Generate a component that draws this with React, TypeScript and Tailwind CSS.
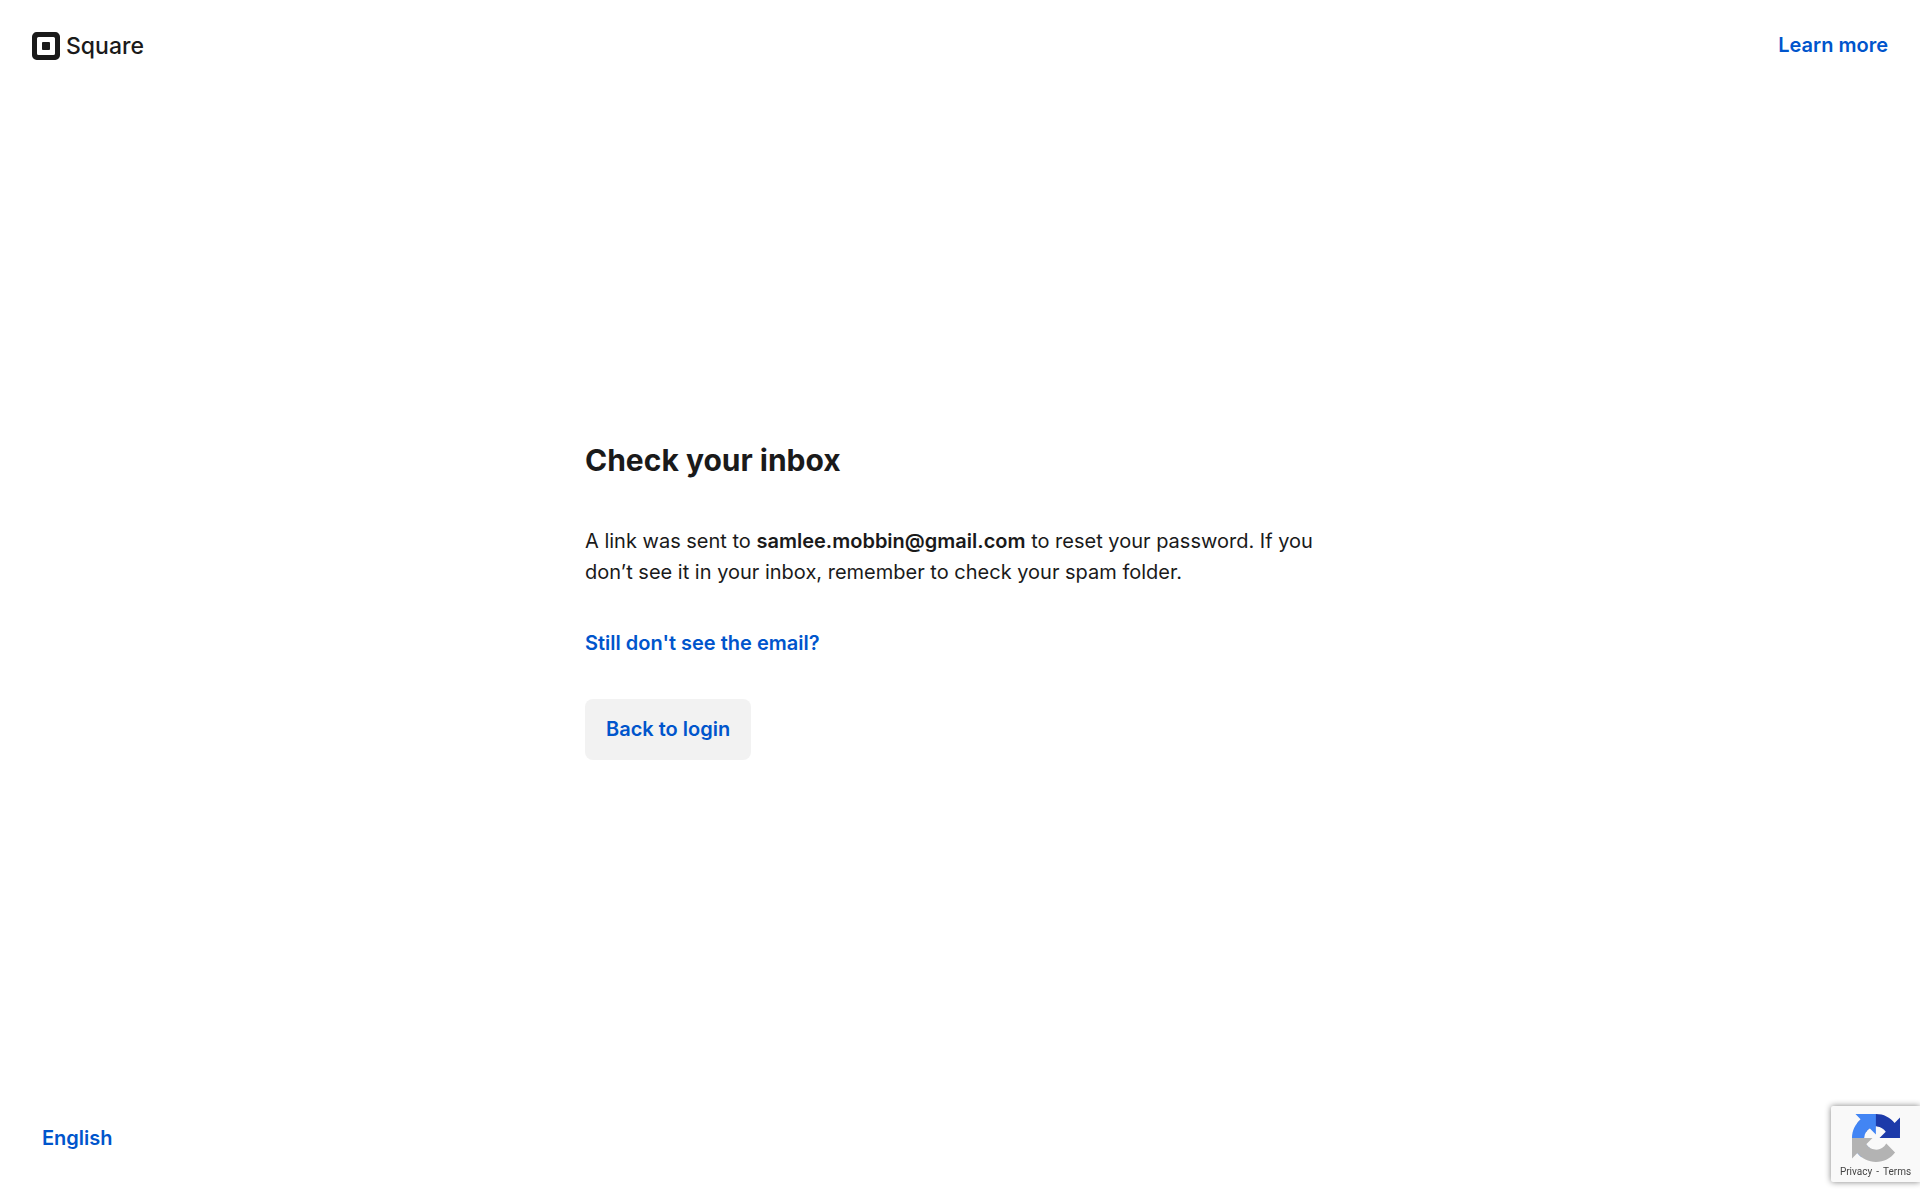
function SquareLogo() {
  return (
    <a href="/" className="flex items-center gap-1.5 text-[#1a1a1a]">
      <svg viewBox="0 0 28 28" className="size-7" fill="currentColor" aria-hidden="true">
        <path
          fillRule="evenodd"
          d="M4.7 0h18.6A4.7 4.7 0 0 1 28 4.7v18.6a4.7 4.7 0 0 1-4.7 4.7H4.7A4.7 4.7 0 0 1 0 23.3V4.7A4.7 4.7 0 0 1 4.7 0Zm1.8 5A1.5 1.5 0 0 0 5 6.5v15A1.5 1.5 0 0 0 6.5 23h15a1.5 1.5 0 0 0 1.5-1.5v-15A1.5 1.5 0 0 0 21.5 5h-15Z"
        />
        <rect x="10" y="10" width="8" height="8" rx="0.9" />
      </svg>
      <span className="text-[23px] leading-7 font-medium">Square</span>
    </a>
  )
}

function RecaptchaIcon() {
  return (
    <svg viewBox="0 0 64 64" className="size-12" aria-hidden="true">
      <path
        fill="#1c3aa9"
        d="M64 31.955l-.033-1.37V4.687l-7.16 7.16C50.948 4.674 42.033.093 32.05.093c-10.4 0-19.622 4.96-25.458 12.64l11.736 11.86a15.55 15.55 0 0 1 4.754-5.334c2.05-1.6 4.952-2.906 8.968-2.906.485 0 .86.057 1.135.163 4.976.393 9.288 3.14 11.828 7.124l-8.307 8.307L64 31.953"
      />
      <path
        fill="#4285f4"
        d="M31.862.094l-1.37.033H4.594l7.16 7.16C4.58 13.147 0 22.06 0 32.046c0 10.4 4.96 19.622 12.64 25.458L24.5 45.768a15.55 15.55 0 0 1-5.334-4.754c-1.6-2.05-2.906-4.952-2.906-8.968 0-.485.057-.86.163-1.135.393-4.976 3.14-9.288 7.124-11.828l8.307 8.307L31.86.095"
      />
      <path
        fill="#b3b3b3"
        d="M.001 32.045l.033 1.37v25.898l7.16-7.16c5.86 7.173 14.774 11.754 24.76 11.754 10.4 0 19.622-4.96 25.458-12.64l-11.736-11.86a15.55 15.55 0 0 1-4.754 5.334c-2.05 1.6-4.952 2.906-8.968 2.906-.485 0-.86-.057-1.135-.163-4.976-.393-9.288-3.14-11.828-7.124l8.307-8.307c-10.522.04-22.4.066-27.295-.005"
      />
    </svg>
  )
}

export default function App() {
  return (
    <div className="flex min-h-screen flex-col bg-white font-['Inter',sans-serif] text-xl leading-[31px] text-[#1a1a1a]">
      {/* Header */}
      <header className="flex items-start justify-between p-8">
        <SquareLogo />
        <a href="#learn-more" className="leading-[26px] font-semibold text-[#0055cc]">
          Learn more
        </a>
      </header>

      {/* Message */}
      <main className="mx-auto flex w-full max-w-[750px] flex-1 flex-col items-start justify-center">
        <h1 className="text-[30px] leading-9 font-bold">Check your inbox</h1>
        <p className="mt-12">
          A link was sent to <strong className="font-semibold">samlee.mobbin@gmail.com</strong> to reset your password.
          If you don’t see it in your inbox, remember to check your spam folder.
        </p>
        <a href="#resend" className="mt-10 font-semibold text-[#0055cc]">
          Still don't see the email?
        </a>
        <button type="button" className="mt-10 rounded-lg bg-[#f2f2f2] px-[21px] py-[15px] font-semibold text-[#0055cc]">
          Back to login
        </button>
      </main>

      {/* Footer */}
      <footer className="px-[42px] pt-3.5 pb-[46px]">
        <button type="button" className="font-semibold text-[#0055cc]">
          English
        </button>
      </footer>

      {/* reCAPTCHA badge */}
      <aside className="fixed right-0 bottom-[18px] flex w-[89px] flex-col items-center rounded-l-xs bg-[#f9f9f9] pt-2 shadow-[0_0_6px_#808080]">
        <RecaptchaIcon />
        <div className="flex gap-1 font-['Roboto',sans-serif] text-[10px] leading-5 text-[#444]">
          <a href="#privacy">Privacy</a>
          <span>-</span>
          <a href="#terms">Terms</a>
        </div>
      </aside>
    </div>
  )
}
